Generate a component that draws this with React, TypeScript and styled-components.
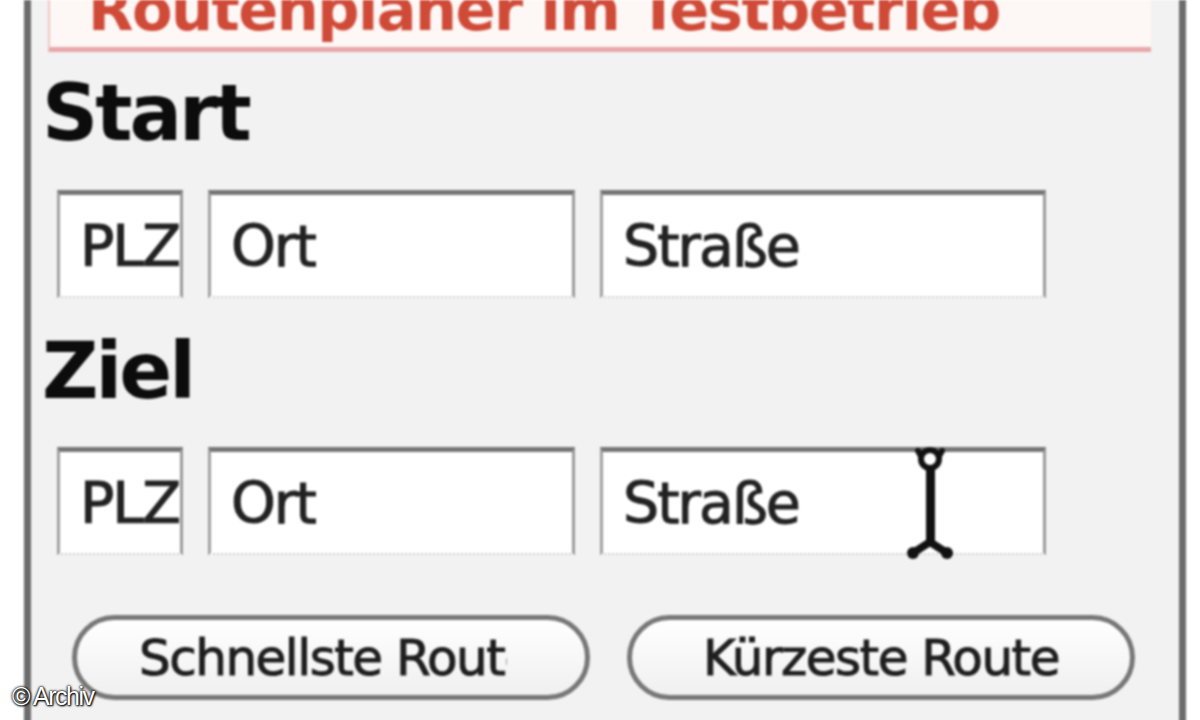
import React from "react";
import styled, { createGlobalStyle } from "styled-components";

const GlobalStyle = createGlobalStyle`
  html, body {
    margin: 0;
    padding: 0;
    background: #ffffff;
    overflow: hidden;
  }
`;

const Page = styled.div`
  position: relative;
  width: 1200px;
  height: 720px;
  overflow: hidden;
  padding-left: 24px;
  box-sizing: border-box;
  background: #ffffff;
  font-family: "DejaVu Sans", Verdana, sans-serif;
`;

const Panel = styled.div`
  width: 1162px;
  height: 760px;
  box-sizing: border-box;
  border-left: 7px solid #6c6c6c;
  border-right: 7px solid #6c6c6c;
  background: #f2f2f2;
  display: flex;
  flex-direction: column;
  filter: blur(0.9px);
`;

const TitleBox = styled.div`
  margin: 0 28px 0 17px;
  height: 47px;
  border-left: 2px solid #f1c4c6;
  border-bottom: 5px solid #e8a6aa;
  background: #fdf7f5;
  overflow: hidden;
`;

const Title = styled.div`
  margin-top: -20px;
  padding-left: 38px;
  font-size: 59px;
  line-height: 59px;
  font-weight: bold;
  letter-spacing: -1.5px;
  color: #d04a38;
  white-space: nowrap;
`;

const Heading = styled.div<{ $top: number }>`
  margin: ${({ $top }) => $top}px 0 0 11px;
  font-size: 78px;
  line-height: 78px;
  font-weight: bold;
  letter-spacing: -3px;
  color: #0c0c0c;
`;

const FieldRow = styled.div<{ $top: number }>`
  display: flex;
  gap: 25px;
  margin-top: ${({ $top }) => $top}px;
  padding-left: 26px;
`;

const Field = styled.div<{ $w: number }>`
  position: relative;
  width: ${({ $w }) => $w}px;
  height: 108px;
  box-sizing: border-box;
  background: #ffffff;
  border-top: 5px solid #767676;
  border-left: 3px solid #a0a0a0;
  border-right: 3px solid #9a9a9a;
  border-bottom: 2px dotted #c8c8c8;
  padding-left: 20px;
  display: flex;
  align-items: center;
  font-size: 57px;
  letter-spacing: -2px;
  color: #222222;
  -webkit-text-stroke: 1px #222222;
  white-space: nowrap;
`;

const FieldText = styled.span`
  display: block;
  overflow: hidden;
`;

const ButtonRow = styled.div`
  display: flex;
  gap: 37px;
  margin-top: 60px;
  padding-left: 41px;
`;

const Button = styled.div<{ $w: number; $center?: boolean }>`
  width: ${({ $w }) => $w}px;
  height: 85px;
  box-sizing: border-box;
  border: 5px solid #777777;
  border-radius: 43px;
  background: linear-gradient(#ffffff, #f0f0f0);
  display: flex;
  align-items: center;
  justify-content: ${({ $center }) => ($center ? "center" : "flex-start")};
  font-size: 50px;
  letter-spacing: -1.5px;
  color: #1e1e1e;
  -webkit-text-stroke: 1px #1e1e1e;
  white-space: nowrap;
`;

const ButtonLabel = styled.span<{ $w?: number }>`
  display: block;
  overflow: hidden;
  margin-left: ${({ $w }) => ($w ? "62px" : "0")};
  width: ${({ $w }) => ($w ? `${$w}px` : "auto")};
`;

const Cursor = styled.svg`
  position: absolute;
  left: 300px;
  top: -9px;
`;

const Watermark = styled.div`
  position: absolute;
  left: 12px;
  bottom: 9px;
  font-family: "Liberation Sans", Arial, sans-serif;
  font-size: 25px;
  letter-spacing: -1.5px;
  color: #ffffff;
  text-shadow: 0 0 3px #000, 0 0 2px #000, 1px 1px 2px #000;
`;

const IBeam = () => (
  <Cursor width="54" height="120" viewBox="0 0 54 120">
    <path d="M15 8 Q27 32 39 8" fill="none" stroke="#111" strokeWidth="6" strokeLinecap="round" />
    <circle cx="27" cy="16" r="9" fill="#fff" stroke="#111" strokeWidth="6" />
    <rect x="23" y="25" width="9" height="76" fill="#111" />
    <path d="M27 99 L10 110 M27 99 L44 110" stroke="#111" strokeWidth="8" strokeLinecap="round" />
    <circle cx="10" cy="110" r="6" fill="#111" />
    <circle cx="44" cy="110" r="6" fill="#111" />
  </Cursor>
);

const AddressFields = ({ cursor }: { cursor?: boolean }) => (
  <>
    <Field $w={126}>
      <FieldText>PLZ</FieldText>
    </Field>
    <Field $w={367}>
      <FieldText>Ort</FieldText>
    </Field>
    <Field $w={446}>
      <FieldText>Straße</FieldText>
      {cursor && <IBeam />}
    </Field>
  </>
);

export default function App() {
  return (
    <Page>
      <GlobalStyle />
      <Panel>
        <TitleBox>
          <Title>Routenplaner im Testbetrieb</Title>
        </TitleBox>

        <Heading $top={22}>Start</Heading>
        <FieldRow $top={38}>
          <AddressFields />
        </FieldRow>

        <Heading $top={34}>Ziel</Heading>
        <FieldRow $top={37}>
          <AddressFields cursor />
        </FieldRow>

        <ButtonRow>
          <Button $w={518}>
            <ButtonLabel $w={368}>Schnellste Route</ButtonLabel>
          </Button>
          <Button $w={508} $center>
            <ButtonLabel>Kürzeste Route</ButtonLabel>
          </Button>
        </ButtonRow>
      </Panel>
      <Watermark>© Archiv</Watermark>
    </Page>
  );
}
